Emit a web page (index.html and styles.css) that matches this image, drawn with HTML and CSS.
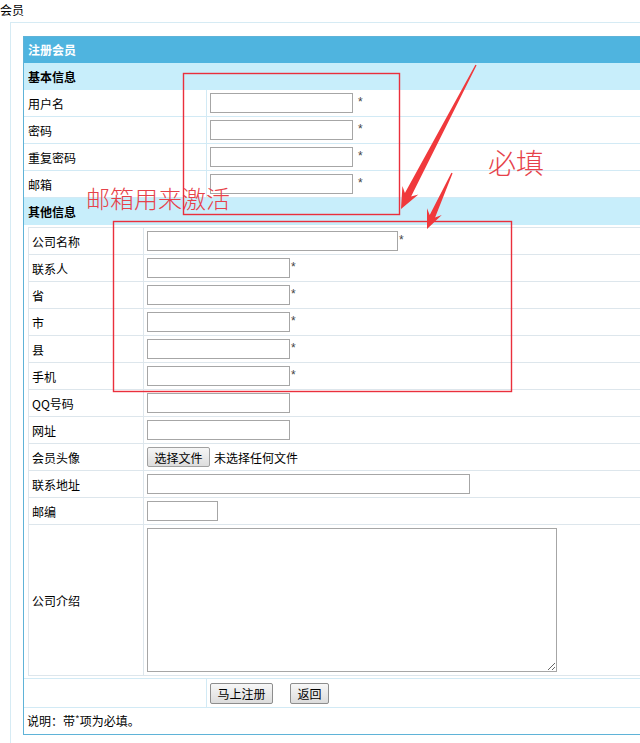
FILE: index.html
```html
<!DOCTYPE html>
<html lang="zh-CN">
<head>
<meta charset="utf-8">
<title>会员</title>
<link rel="stylesheet" href="styles.css">
</head>
<body>
<div class="crumb">会员</div>
<div class="frame">
  <div class="form">
    <div class="title">注册会员</div>
    <div class="section">基本信息</div>
    <div class="row"><div class="lbl">用户名</div><div class="fld"><input class="in w143" type="text"><span class="req sp">*</span></div></div>
    <div class="row"><div class="lbl">密码</div><div class="fld"><input class="in w143" type="password"><span class="req sp">*</span></div></div>
    <div class="row"><div class="lbl">重复密码</div><div class="fld"><input class="in w143" type="password"><span class="req sp">*</span></div></div>
    <div class="row"><div class="lbl">邮箱</div><div class="fld"><input class="in w143" type="text"><span class="req sp">*</span></div></div>
    <div class="section">其他信息</div>
    <div class="nest-wrap">
      <div class="sub">
        <div class="srow"><div class="slbl">公司名称</div><div class="sfld"><input class="in w251" type="text"><span class="req">*</span></div></div>
        <div class="srow"><div class="slbl">联系人</div><div class="sfld"><input class="in w143" type="text"><span class="req">*</span></div></div>
        <div class="srow"><div class="slbl">省</div><div class="sfld"><input class="in w143" type="text"><span class="req">*</span></div></div>
        <div class="srow"><div class="slbl">市</div><div class="sfld"><input class="in w143" type="text"><span class="req">*</span></div></div>
        <div class="srow"><div class="slbl">县</div><div class="sfld"><input class="in w143" type="text"><span class="req">*</span></div></div>
        <div class="srow"><div class="slbl">手机</div><div class="sfld"><input class="in w143" type="text"><span class="req">*</span></div></div>
        <div class="srow"><div class="slbl">QQ号码</div><div class="sfld"><input class="in w143" type="text"></div></div>
        <div class="srow"><div class="slbl">网址</div><div class="sfld"><input class="in w143" type="text"></div></div>
        <div class="srow"><div class="slbl">会员头像</div><div class="sfld"><span class="filebtn">选择文件</span><span class="filetxt">未选择任何文件</span></div></div>
        <div class="srow"><div class="slbl">联系地址</div><div class="sfld"><input class="in w323" type="text"></div></div>
        <div class="srow"><div class="slbl">邮编</div><div class="sfld"><input class="in w71" type="text"></div></div>
        <div class="srow last"><div class="slbl">公司介绍</div><div class="sfld"><textarea class="intro"></textarea></div></div>
      </div>
    </div>
    <div class="row actions"><div class="lbl"></div><div class="fld"><button class="btn b-reg" type="button">马上注册</button><button class="btn b-back" type="button">返回</button></div></div>
    <div class="note">说明：带<span class="star">*</span>项为必填。</div>
  </div>
</div>

<div class="anno">
  <span class="anno-text t1">邮箱用来激活</span>
  <span class="anno-text t2">必填</span>
  <svg class="arrows" width="640" height="743" viewBox="0 0 640 743" xmlns="http://www.w3.org/2000/svg">
    <rect x="183.5" y="73.5" width="216" height="141" fill="none" stroke="#ea2f3c" stroke-width="1.4"/>
    <rect x="113.5" y="221.5" width="398" height="170" fill="none" stroke="#ea2f3c" stroke-width="1.4"/>
    <polygon fill="#f0393c" points="476.6,65.3 411.1,196.4 418.4,194.5 401,209 402.4,186.0 404.9,193.1 475.4,64.7"/>
    <polygon fill="#f0393c" points="452.6,173.3 435.1,217.4 441.8,215.0 427,229 427.0,208.2 429.7,214.9 451.4,172.7"/>
  </svg>
</div>
</body>
</html>
```

FILE: styles.css
```css
html, body {
  margin: 0;
  padding: 0;
  background: #fff;
  overflow: hidden;
  height: 743px;
}
body {
  font: 12px "Noto Sans CJK SC", "Liberation Sans", sans-serif;
  color: #000;
  position: relative;
}
.crumb {
  height: 22px;
  line-height: 20px;
}
.frame {
  margin-left: 10px;
  border-top: 1px solid #d6ebf4;
  border-left: 1px solid #d6ebf4;
  padding: 13px 0 0 12px;
  height: 720px;
}
.form {
  border: 1px solid #5fb3d8;
  border-right: none;
  background: #fff;
}
.title {
  height: 26px;
  line-height: 26px;
  background: #4fb4df;
  color: #fff;
  font-weight: bold;
  padding-left: 4px;
}
.section {
  height: 27px;
  line-height: 27px;
  background: #c8eefb;
  font-weight: bold;
  padding-left: 4px;
}
.row {
  display: flex;
  height: 27px;
  box-sizing: border-box;
  border-bottom: 1px solid #d2eaf5;
}
.lbl {
  width: 183px;
  flex: none;
  box-sizing: border-box;
  border-right: 1px solid #d2eaf5;
  padding-left: 4px;
  display: flex;
  align-items: center;
}
.fld {
  padding-left: 3px;
  display: flex;
  align-items: center;
}
.in {
  box-sizing: border-box;
  height: 20px;
  border: 1px solid #a6a6a6;
  padding: 0 2px;
  margin: 0;
  font: 12px "Noto Sans CJK SC", sans-serif;
  background: #fff;
}
.w143 { width: 143px; }
.w251 { width: 251px; }
.w323 { width: 323px; }
.w71 { width: 71px; }
.req {
  color: #444;
  font-family: "Liberation Sans", sans-serif;
  font-size: 12px;
  position: relative;
  top: -1px;
  margin-left: 1px;
}
.req.sp {
  margin-left: 5px;
}
.nest-wrap {
  padding: 2px 0 2px 4px;
  border-bottom: 1px solid #d2eaf5;
}
.sub {
  border: 1px solid #dde6ec;
  border-right: none;
}
.srow {
  display: flex;
  height: 27px;
  box-sizing: border-box;
  border-bottom: 1px solid #dde6ec;
}
.srow.last {
  height: auto;
  border-bottom: none;
}
.slbl {
  width: 115px;
  flex: none;
  box-sizing: border-box;
  border-right: 1px solid #dde6ec;
  padding-left: 3px;
  display: flex;
  align-items: center;
}
.sfld {
  padding-left: 3px;
  display: flex;
  align-items: center;
}
.srow.last .sfld {
  padding-top: 3px;
  padding-bottom: 3px;
}
.intro {
  box-sizing: border-box;
  width: 410px;
  height: 144px;
  border: 1px solid #a6a6a6;
  margin: 0;
  padding: 2px;
  display: block;
  resize: both;
}
.filebtn {
  box-sizing: border-box;
  width: 63px;
  height: 20px;
  border: 1px solid #a0a0a0;
  border-radius: 2px;
  background: linear-gradient(#f6f6f6, #dddddd);
  display: flex;
  align-items: center;
  justify-content: center;
  font-size: 12px;
}
.filetxt {
  margin-left: 4px;
}
.actions {
  height: 29px;
}
.btn {
  box-sizing: border-box;
  height: 21px;
  border: 1px solid #8d8d8d;
  border-radius: 2px;
  background: linear-gradient(#f7f7f7, #dcdcdc);
  font: 12px "Noto Sans CJK SC", sans-serif;
  color: #000;
  padding: 0;
  margin: 0;
}
.b-reg { width: 63px; }
.b-back { width: 39px; margin-left: 17px; }
.note {
  height: 26px;
  line-height: 26px;
  padding-left: 3px;
}
.star {
  font-size: 10px;
  position: relative;
  top: -3px;
  color: #333;
}
.anno {
  position: absolute;
  left: 0;
  top: 0;
  width: 640px;
  height: 743px;
  pointer-events: none;
}
.anno-text {
  position: absolute;
  color: #e6424a;
  font-family: "Noto Sans CJK SC", sans-serif;
  font-weight: 300;
  line-height: 1;
  white-space: nowrap;
}
.t1 { left: 86px; top: 186px; font-size: 24px; }
.t2 { left: 488px; top: 148px; font-size: 28px; }
.arrows {
  position: absolute;
  left: 0;
  top: 0;
}
```
